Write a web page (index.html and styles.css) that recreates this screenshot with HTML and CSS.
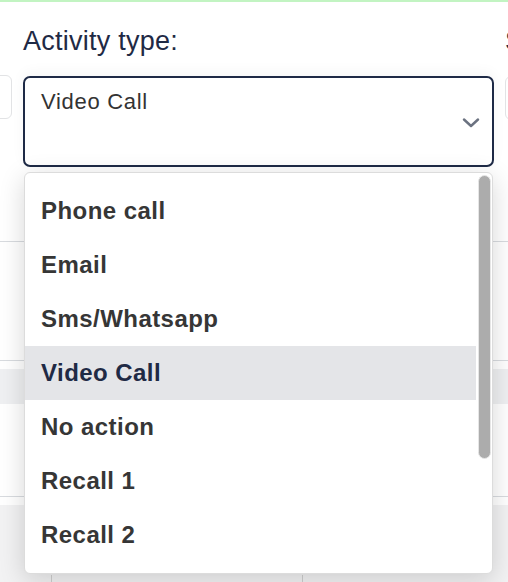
FILE: index.html
```html
<!DOCTYPE html>
<html>
<head>
<meta charset="utf-8">
<link rel="stylesheet" href="styles.css">
</head>
<body>
<div class="topbar"></div>
<div class="form-row">
  <div class="field field-left">
    <div class="stub-box"></div>
  </div>
  <div class="field field-main">
    <div class="label">Activity type:</div>
    <div class="select">
      <span class="select-value">Video Call</span>
      <svg class="chevron" width="18" height="10" viewBox="0 0 18 10"><polyline points="2,1.5 9,8 16,1.5" fill="none" stroke="#6b7280" stroke-width="2.4" stroke-linecap="round" stroke-linejoin="round"/></svg>
    </div>
    <div class="menu">
      <ul class="menu-list">
        <li class="menu-item">Phone call</li>
        <li class="menu-item">Email</li>
        <li class="menu-item">Sms/Whatsapp</li>
        <li class="menu-item is-active">Video Call</li>
        <li class="menu-item">No action</li>
        <li class="menu-item">Recall 1</li>
        <li class="menu-item">Recall 2</li>
      </ul>
      <div class="scroll-track"><div class="scroll-thumb"></div></div>
    </div>
  </div>
  <div class="field field-right">
    <div class="label">Status</div>
    <div class="stub-box"></div>
  </div>
</div>
<div class="table">
  <div class="row row-1"></div>
  <div class="row row-2"></div>
  <div class="row row-band"></div>
  <div class="row row-3"></div>
  <div class="footer">
    <div class="cell cell-a"></div>
    <div class="cell cell-b"></div>
    <div class="cell cell-c"></div>
  </div>
</div>
</body>
</html>
```
FILE: styles.css
```css
* { box-sizing: border-box; }
html, body { margin: 0; padding: 0; }
body {
  width: 508px;
  height: 582px;
  overflow: hidden;
  background: #ffffff;
  font-family: "Liberation Sans", Arial, sans-serif;
}
.topbar {
  height: 2px;
  background: #c2f4c2;
}
.form-row {
  display: flex;
  gap: 11px;
  padding-top: 23px;
  margin-left: -88px;
  position: relative;
  z-index: 2;
}
.field { flex: none; }
.field-left { width: 100px; padding-top: 50px; }
.field-main { width: 471px; position: relative; }
.field-right { width: 200px; }
.label {
  font-size: 27px;
  line-height: 32px;
  letter-spacing: 0.25px;
  color: #1f2a45;
  white-space: nowrap;
}
.stub-box {
  height: 44px;
  border: 1px solid #e2e3e5;
  border-radius: 6px;
  background: #fff;
}
.field-right .stub-box { margin-top: 19px; }
.select {
  margin-top: 19px;
  height: 91px;
  border: 2px solid #1e2a46;
  border-radius: 7px;
  background: #fff;
  display: flex;
  align-items: flex-start;
  padding: 11px 12px 0 16px;
  box-shadow: 0 -4px 14px rgba(0,0,0,0.04);
}
.select-value {
  font-size: 22px;
  line-height: 26px;
  letter-spacing: 0.7px;
  color: #333333;
}
.chevron {
  margin-left: auto;
  align-self: center;
  margin-top: -8px;
}
.menu {
  position: absolute;
  top: calc(100% + 5px);
  left: 1px;
  width: 469px;
  height: 402px;
  background: #fff;
  border: 1px solid #dcdcdc;
  border-radius: 6px;
  box-shadow: 0 6px 26px rgba(0,0,0,0.16);
  display: flex;
  overflow: hidden;
}
.menu-list {
  list-style: none;
  margin: 0;
  padding: 11px 0 0 0;
  flex: 1;
}
.menu-item {
  height: 54px;
  line-height: 54px;
  padding-left: 16px;
  font-size: 24px;
  font-weight: 700;
  letter-spacing: 0.45px;
  color: #363636;
}
.menu-item.is-active {
  background: #e4e5e8;
  color: #1f2a45;
}
.scroll-track {
  width: 16px;
  padding: 2px 1px 0 2px;
}
.scroll-thumb {
  height: 284px;
  background: #acacac;
  border: 1px solid #e6e6e6;
  border-radius: 7px;
}
.table {
  position: relative;
  z-index: 1;
}
.row { border-bottom: 1px solid #d8dbdf; }
.row-1 { height: 75px; }
.row-2 { height: 119px; }
.row-band {
  height: 35px;
  margin-top: 8px;
  border-bottom: none;
  background: #eff0f2;
}
.row-3 { height: 93px; }
.footer {
  margin-top: 8px;
  height: 90px;
  background: #f2f2f3;
  display: grid;
  grid-template-columns: 52px 251px 1fr;
  align-items: end;
}
.cell { height: 20px; }
.cell-a, .cell-b { border-right: 1px solid #cfcfcf; }
```
